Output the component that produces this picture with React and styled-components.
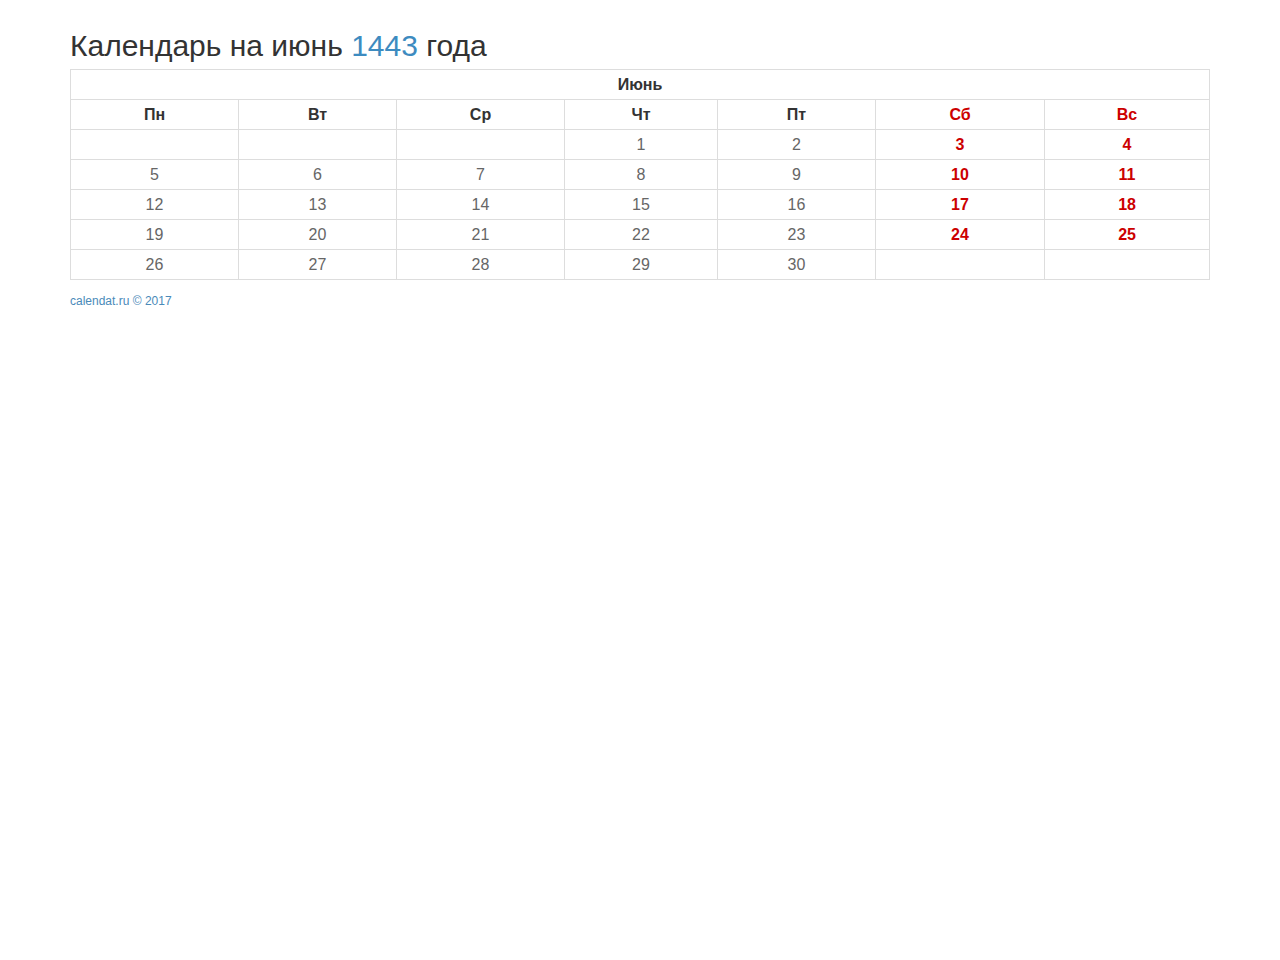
import React from "react";
import styled, { createGlobalStyle } from "styled-components";

const GlobalStyle = createGlobalStyle`
  body {
    margin: 0;
    background: #fff;
    font-family: "Liberation Sans", Arial, Helvetica, sans-serif;
    color: #333;
  }
`;

const Page = styled.div`
  padding: 29px 70px 0 70px;
`;

const Title = styled.h1`
  font-size: 30px;
  font-weight: 400;
  line-height: 33px;
  margin: 0 0 7px 0;
  color: #333;
`;

const Year = styled.span`
  color: #3d8bc0;
`;

const Table = styled.table`
  width: 1139px;
  border-collapse: collapse;
  table-layout: fixed;
  font-size: 16px;
`;

const Cell = styled.td`
  height: 29px;
  padding: 0;
  border: 1px solid #ddd;
  text-align: center;
  vertical-align: middle;
  font-size: 16px;
  font-weight: ${(p) => (p.$bold || p.$red ? 700 : 400)};
  color: ${(p) => (p.$red ? "#c00" : p.$bold ? "#333" : "#666")};
`;

const Footer = styled.div`
  margin-top: 14px;
  font-size: 12px;
  color: #4a8ab9;
`;

const widths = [168, 158, 168, 153, 158, 169, 165];
const days = ["Пн", "Вт", "Ср", "Чт", "Пт", "Сб", "Вс"];
const weeks = [
  ["", "", "", 1, 2, 3, 4],
  [5, 6, 7, 8, 9, 10, 11],
  [12, 13, 14, 15, 16, 17, 18],
  [19, 20, 21, 22, 23, 24, 25],
  [26, 27, 28, 29, 30, "", ""],
];

export default function App() {
  return (
    <>
      <GlobalStyle />
      <Page>
        <Title>
          Календарь на июнь <Year>1443</Year> года
        </Title>
        <Table>
          <colgroup>
            {widths.map((w, i) => (
              <col key={i} style={{ width: w }} />
            ))}
          </colgroup>
          <tbody>
            <tr>
              <Cell as="th" colSpan={7} $bold>
                Июнь
              </Cell>
            </tr>
            <tr>
              {days.map((d, i) => (
                <Cell as="th" key={d} $bold $red={i >= 5}>
                  {d}
                </Cell>
              ))}
            </tr>
            {weeks.map((w, wi) => (
              <tr key={wi}>
                {w.map((d, i) => (
                  <Cell key={i} $red={i >= 5}>
                    {d}
                  </Cell>
                ))}
              </tr>
            ))}
          </tbody>
        </Table>
        <Footer>calendat.ru © 2017</Footer>
      </Page>
    </>
  );
}
